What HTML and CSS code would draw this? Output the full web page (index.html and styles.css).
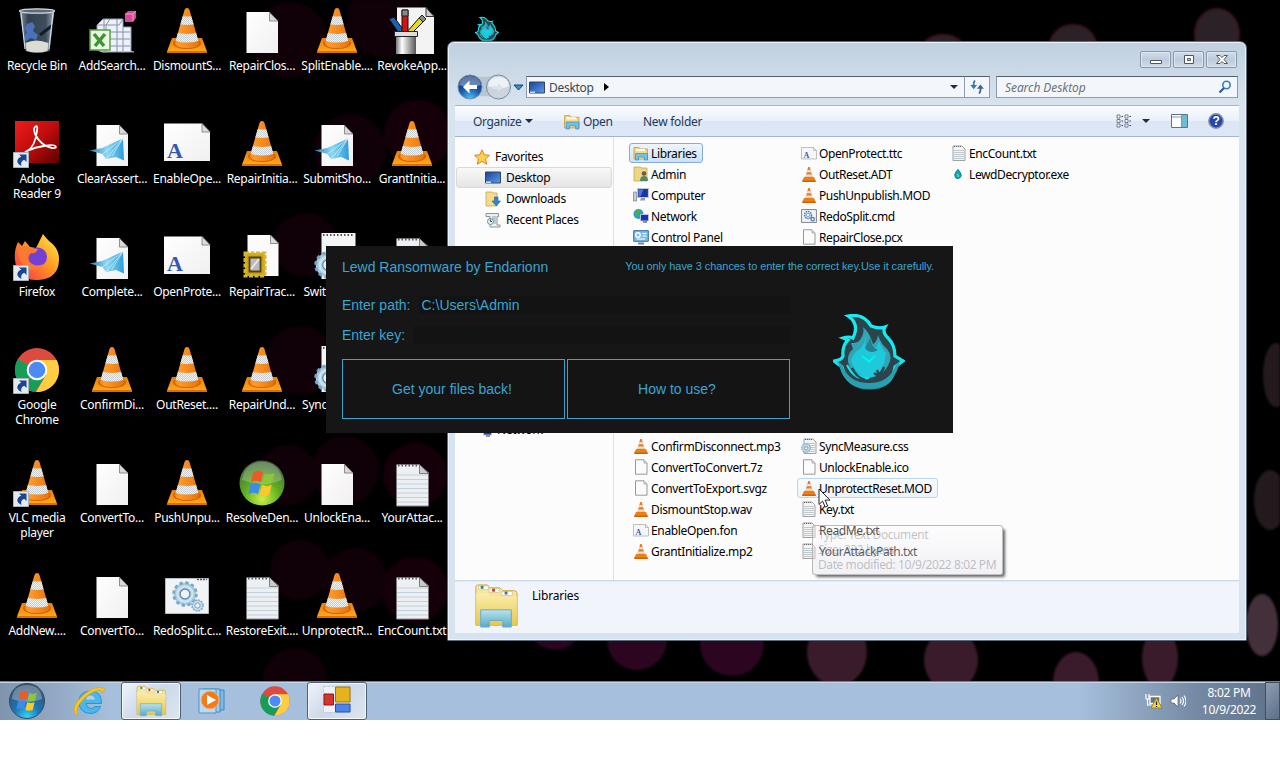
FILE: index.html
```html
<!DOCTYPE html>
<html lang="en">
<head>
<meta charset="utf-8">
<title>Desktop</title>
<link rel="stylesheet" href="styles.css">
</head>
<body>
<svg class="defs" width="0" height="0">
  <defs>
    <linearGradient id="gCone" x1="0" x2="1"><stop offset="0" stop-color="#e06a08"/><stop offset=".35" stop-color="#ff9a28"/><stop offset="1" stop-color="#d85c00"/></linearGradient>
    <linearGradient id="gBase" x1="0" x2="0" y1="0" y2="1"><stop offset="0" stop-color="#e87f0c"/><stop offset="1" stop-color="#ffa818"/></linearGradient>
    <linearGradient id="gRed" x1="0" x2="1" y1="0" y2="1"><stop offset="0" stop-color="#ee1c1c"/><stop offset=".5" stop-color="#c00c0c"/><stop offset="1" stop-color="#5c0000"/></linearGradient>
    <linearGradient id="gPage" x1="0" x2="1" y1="0" y2="1"><stop offset="0" stop-color="#fff"/><stop offset="1" stop-color="#f0f0f0"/></linearGradient>
    <linearGradient id="gFold" x1="0" x2="0" y1="0" y2="1"><stop offset="0" stop-color="#fbeeb0"/><stop offset="1" stop-color="#e8c84c"/></linearGradient>
    <linearGradient id="gStand" x1="0" x2="0" y1="0" y2="1"><stop offset="0" stop-color="#b5e4f6"/><stop offset="1" stop-color="#4ca7d8"/></linearGradient>
    <linearGradient id="gPlane" x1="0" x2="1"><stop offset="0" stop-color="#2382b8"/><stop offset=".5" stop-color="#8fd8f2"/><stop offset="1" stop-color="#2b9dd8"/></linearGradient>
    <linearGradient id="gMon" x1="0" x2="1" y1="0" y2="1"><stop offset="0" stop-color="#1c3f9c"/><stop offset="1" stop-color="#5aa0e6"/></linearGradient>
    <linearGradient id="gFox" x1="1" x2="0" y1="0" y2="1"><stop offset="0" stop-color="#fff04a"/><stop offset=".45" stop-color="#ff9a22"/><stop offset="1" stop-color="#f5224e"/></linearGradient>
    <linearGradient id="gBin" x1="0" x2="1"><stop offset="0" stop-color="#8796a6"/><stop offset=".25" stop-color="#33414f"/><stop offset=".75" stop-color="#3e4d5c"/><stop offset="1" stop-color="#a3b0bc"/></linearGradient>
    <linearGradient id="gCup" x1="0" x2="1"><stop offset="0" stop-color="#777"/><stop offset=".3" stop-color="#fff"/><stop offset="1" stop-color="#555"/></linearGradient>
    <linearGradient id="gRim" x1="0" x2="0" y1="0" y2="1"><stop offset="0" stop-color="#14eef4"/><stop offset=".7" stop-color="#1fe0e8"/><stop offset="1" stop-color="#2b93a4"/></linearGradient>
    <radialGradient id="gGreen" cx=".5" cy=".85" r=".8"><stop offset="0" stop-color="#c8f04a"/><stop offset=".5" stop-color="#5fae1e"/><stop offset="1" stop-color="#456b3c"/></radialGradient>
    <radialGradient id="gOrb" cx=".5" cy=".95" r=".85"><stop offset="0" stop-color="#35d4f8"/><stop offset=".45" stop-color="#1c74b4"/><stop offset="1" stop-color="#36546f"/></radialGradient>
    <radialGradient id="gBack" cx=".5" cy="1" r=".9"><stop offset="0" stop-color="#46c8f8"/><stop offset=".5" stop-color="#1d5cb0"/><stop offset="1" stop-color="#0e2f72"/></radialGradient>
    <pattern id="pChk" width="2" height="2" patternUnits="userSpaceOnUse"><path d="M0 0h2v2H0z" fill="#f2f4f6"/><path d="M0 0h1v1H0zM1 1h1v1H1z" fill="#c4ccd2"/></pattern>
    <clipPath id="cCone"><path d="M21.500 3q.5-2 2.500-2t2.500 2L36 36q0 5-12 5T12 36z"/></clipPath>

    <symbol id="cone" viewBox="0 0 48 48">
      <path d="M9 31h30l5 13.500H4z" fill="url(#gBase)"/><path d="M4 44h40v2H4z" fill="#d96f06"/><ellipse cx="24" cy="36.500" rx="14" ry="5.500" fill="#d26404"/>
      <g clip-path="url(#cCone)"><path d="M0 0h48v48H0z" fill="url(#gCone)"/><path d="M10 8q14 3 28 0v8q-14 4-28 0zM10 25q14 4 28 0v8q-14 5-28 0z" fill="url(#pChk)"/></g>
    </symbol>
    <symbol id="cone-s" viewBox="0 0 16 16"><path d="M3 11h10l1.700 4H1.300z" fill="#f08010"/><path d="M1.200 14.500h13.600V16H1.200z" fill="#d06000"/><path d="M7.200 1h1.600l3 11q-3.800 2-7.600 0z" fill="#ee7c14"/><path d="M6.400 4h3.200l.6 2.200H5.800zM5.200 8.500h5.600l.6 2.200H4.600z" fill="#dfe3e8"/></symbol>
    <symbol id="page" viewBox="0 0 48 48"><path d="M8.500 5h23l8.500 9v32H8.500z" fill="url(#gPage)"/><path d="M31.500 5.500v8.500H40z" fill="#d8d8d8" stroke="#777" stroke-width=".8"/></symbol>
    <symbol id="page-s" viewBox="0 0 16 16"><path d="M2.500.8h8.500l3 3.200v11.200H2.500z" fill="#fbfbfb" stroke="#8c8c8c" stroke-width=".9"/><path d="M11 .8V4h3" fill="#ddd" stroke="#999" stroke-width=".7"/></symbol>
    <symbol id="plane" viewBox="0 0 48 48"><use href="#page"/><path d="M1.500 30.500L14 28 35 18.500 36 40.500 28 37 18 39 14.500 34z" fill="url(#gPlane)"/><path d="M14.500 34L35 18.500 18 39M35 18.500L24 36" stroke="#d5f2fc" stroke-width=".7" fill="none"/></symbol>
    <symbol id="font" viewBox="0 0 48 48"><path d="M1 3.500h38l8 8V41H1z" fill="url(#gPage)"/><path d="M39 3.500V12h8z" fill="#ddd" stroke="#777" stroke-width=".8"/><text x="4" y="38" class="glyph-a">A</text></symbol>
    <symbol id="font-s" viewBox="0 0 16 16"><path d="M.5 2.500h12l3 3V14H.5z" fill="#f5f6f8" stroke="#a8a8a8" stroke-width=".7"/><path d="M12.500 2.500v3h3" fill="none" stroke="#aaa" stroke-width=".7"/><text x="2.500" y="12.500" class="glyph-as">A</text></symbol>
    <symbol id="note" viewBox="0 0 48 48"><path d="M8.500 5.500h23l9 8V47h-32z" fill="#edf0f3"/><path d="M9 16h31M9 20.500h31M9 25h31M9 29.500h31M9 34h31M9 38.500h31M9 43h31" stroke="#c3cedb" stroke-width="1"/><path d="M10 6.500h22" stroke="#555" stroke-width="2" stroke-dasharray="1.500 2"/><path d="M31.500 5.500v9h9z" fill="#c8ccd0" stroke="#666" stroke-width=".8"/><path d="M8.500 47h32" stroke="#889"/></symbol>
    <symbol id="note-s" viewBox="0 0 16 16"><path d="M2 1h9l3 3v11.500H2z" fill="#f2f4f5" stroke="#999" stroke-width=".9"/><path d="M3 5.500h10M3 7.500h10M3 9.500h10M3 11.500h10M3 13.500h10" stroke="#b4bcc4" stroke-width=".8"/><path d="M3 1.500h8" stroke="#666" stroke-dasharray="1 1"/></symbol>
    <symbol id="gear" viewBox="0 0 24 24"><circle cx="12" cy="12" r="7.500" fill="none" stroke="#a9cbe0" stroke-width="6"/><circle cx="12" cy="12" r="10.500" fill="none" stroke="#7ba6c8" stroke-width="2.500" stroke-dasharray="3 2.500"/><circle cx="12" cy="12" r="7" fill="none" stroke="#cfe5f0" stroke-width="2"/><circle cx="12" cy="12" r="4.500" fill="none" stroke="#5580a8"/></symbol>
    <symbol id="gearpage" viewBox="0 0 48 48"><path d="M8.500 0h34v46h-34z" fill="#f4f5f6"/><path d="M10 2h31" stroke="#555" stroke-width="2" stroke-dasharray="1.500 2"/><use href="#gear" x="1" y="18" width="28" height="28"/></symbol>
    <symbol id="gearpage-s" viewBox="0 0 16 16"><use href="#note-s" x="1"/><use href="#gear" x="0" y="5" width="10" height="10"/></symbol>
    <symbol id="cmd" viewBox="0 0 48 48"><path d="M2.500 6.500h43v35h-43z" fill="#f2f3f5" stroke="#b7bcc2"/><path d="M34 7.500h10" stroke="#555" stroke-width="1.500" stroke-dasharray="2 1"/><use href="#gear" x="9" y="9" width="26" height="26"/><use href="#gear" x="28" y="27" width="13" height="13"/></symbol>
    <symbol id="cmd-s" viewBox="0 0 16 16"><path d="M.6 1.600h14.800v12.800H.6z" fill="#f4f6f9" stroke="#7d838a"/><circle cx="7" cy="7" r="3.500" fill="none" stroke="#4f83b5" stroke-width="1.600" stroke-dasharray="1.600 .7"/><circle cx="7" cy="7" r="1.800" fill="none" stroke="#7da3c8"/><circle cx="11.700" cy="11.200" r="1.700" fill="none" stroke="#4f83b5" stroke-width="1.300"/></symbol>
    <symbol id="stamp" viewBox="0 0 48 48"><path d="M9.500 2h23l8 8v33h-31z" fill="#fbfbfb"/><path d="M32.500 2v8.500h8z" fill="#ddd" stroke="#777" stroke-width=".8"/><path d="M7 20h20v23H7z" fill="#c9a41c" stroke="#d9b72c" stroke-width="3" stroke-dasharray="4 1.500"/><path d="M11.500 24.500h11v14h-11z" fill="#b9b9c2" stroke="#54440a" stroke-width="1.800"/><path d="M13 36l8-10" stroke="#e6e6ee" stroke-width="2"/></symbol>
    <symbol id="arrow" viewBox="0 0 16 16"><path d="M.5.500h15v15H.5z" fill="#e4eaf0" stroke="#aab4bf"/><path d="M6 2.500h7.500V10l-2.300-2.300Q7 9.500 8.500 14 2.500 11 5 7q1.200-1.600 3.300-2.200z" fill="#1a4590"/></symbol>
    <symbol id="win" viewBox="0 0 24 24"><path d="M5 4q4-2.500 7.500 0l-1.700 7.500q-3.800-2.300-7.400 0z" fill="#ee5a24"/><path d="M13.800 4.800q3.800 2 7.200-.4l-1.800 7.500q-3.600 2-7.200 0z" fill="#8cc63e"/><path d="M3 13q3.700-2.400 7.400 0l-1.800 7.500q-3.600-2.300-7.400 0z" fill="#3c8ce8"/><path d="M11.700 13.400q3.700 2.100 7.200 0l-1.800 7.400q-3.600 2.100-7.200 0z" fill="#fcc82c"/></symbol>
    <symbol id="greenorb" viewBox="0 0 48 48"><circle cx="24" cy="24" r="22.500" fill="url(#gGreen)"/><path d="M4 21q3-18 20-18t20 18q-20 8-40 0z" fill="#fff" opacity=".22"/><use href="#win" x="8.500" y="8" width="32" height="32"/></symbol>
    <symbol id="bin" viewBox="0 0 48 48"><path d="M6.500 3h35l-5 41q-12 4-24 0z" fill="url(#gBin)"/><ellipse cx="24" cy="4" rx="17.500" ry="2.200" fill="#5d6c7a" stroke="#d5dde4" stroke-width="1.200"/><path d="M12.500 36q10-5 23 0l-1 8q-10 3-21 0z" fill="#dcdcd4"/><path d="M14 17l5-2 3 4-2 5 5 4-2 5-5-2-5 3-3-4 4-4-2-5z" fill="#4a72ba"/><path d="M27 28l13-10" stroke="#141c28" stroke-width="3"/><path d="M8 6l4 36M40 6l-4 36" stroke="#d3dce4" stroke-width="1.200"/></symbol>
    <symbol id="adobe" viewBox="0 0 48 48"><path d="M2 1h44v42H2z" fill="url(#gRed)"/><path d="M14 31q8-4 10-20 1-6-1.500-4.500T22 14q6 12 17 14 5 .5 3.500-1.800T31 26q-9 1-17 5-3 2-1 1z" fill="none" stroke="#fff" stroke-width="1.800"/></symbol>
    <symbol id="excel" viewBox="0 0 48 48"><path d="M9 18l6-6h20v8h8v24l3 1H14l-5-2z" fill="#eef2f8" stroke="#8b9ab4"/><path d="M9 18h22l4-6M16 12v34M22 12l-4 6v28M29 12v33M35 20v26M22 25h20M22 32h20M22 39h20" stroke="#8292b0" fill="none"/><path d="M37 7l3-3h8v7l-3 4h-8z" fill="#d8489c"/><path d="M37 7h8v7M45 7l3-3" stroke="#f4a0cc" fill="none"/><path d="M2 23h20v20H2z" fill="#e9f6e4" stroke="#5aa046" stroke-width="1.500"/><path d="M6 27l10 12M17 27L7 39" stroke="#3c9433" stroke-width="3.500"/></symbol>
    <symbol id="paint" viewBox="0 0 48 48"><path d="M9 .5h29l8 8.500v38H9z" fill="#f3f3f3"/><path d="M38 .5v9h8z" fill="#ccc" stroke="#333"/><path d="M1 12l5-2 11 15h-7z" fill="#1e5fae" stroke="#111"/><path d="M14 3h6v22h-6z" fill="#d41414" stroke="#111"/><path d="M32 10l4 4-12 12h-6z" fill="#e8d820" stroke="#111"/><path d="M14 3h6v6h-6zM31 11l3-3 4 4-3 3z" fill="#888" stroke="#222"/><path d="M8 26h20v21H8z" fill="url(#gCup)"/><path d="M6.500 24.500h23v5h-23z" fill="#ddd" stroke="#222"/></symbol>
    <symbol id="firefox" viewBox="0 0 48 48"><path d="M30 1q3 4 6 7 10 7 10 18 0 20-21 21T2 27Q1 17 5 9l4 4 3-5 5 6 6 1q4-8 7-14z" fill="url(#gFox)"/><circle cx="24.500" cy="24" r="9.500" fill="#7440d4"/><path d="M5 14q8-2 12 1l8 1q-2 5-7 4-4 4-2 8 5 7 15 3-6 8-16 5Q5 31 5 14z" fill="#ff7a30"/></symbol>
    <symbol id="chrome" viewBox="0 0 48 48"><circle cx="24" cy="24" r="22" fill="#dd4b3e"/><path d="M24 24L4.900 13A22 22 0 0 0 22 46l11-17z" fill="#169d57"/><path d="M24 14h19.600A22 22 0 0 1 23 46l10-17z" fill="#ffcd42"/><circle cx="24" cy="24" r="10.300" fill="#fff"/><circle cx="24" cy="24" r="8.300" fill="#4c8bf5"/></symbol>
    <symbol id="flame" viewBox="0 0 72 76"><path d="M15 2Q31-1 38 12q8 3 14 1-3 5 3 11 7 7 7 18l8 5-8 6Q59 74 36 74 14 73 9 53l-8-6q8-1 9-5-1-10 5-16l-5-2q6-2 10 0Q27 10 15 2z" fill="#2c444c" stroke="url(#gRim)" stroke-width="3.200"/><path d="M9 51q7 18 27 18t27-18l4-4q-5 26-31 27T5 47z" fill="#289eae"/><path d="M30 13q7 6 10 17 4-2 5-9 3 9 9 14 5 6 3 12-5 15-21 17-17-1-21-16-1-8 5-13l-2-6q6 0 8-2 6-7 4-14z" fill="#2fa5b6"/><path d="M33 17q1 8-1 13 3 10 12 2l2-5q3 8 7 12-2 22-18 25Q22 61 18 46q3-8 9-11 7-8 6-18z" fill="#1fc9dc"/><path d="M38 23q-1 10 7 13-8 5-13-2z" fill="#257d8e"/><path d="M29 42l7 5 6-5-6 6z" fill="#0ff" stroke="#00f2f6" stroke-width="1.500"/><path d="M14 51q8 16 21 13M20 57q8 8 16 7" stroke="#0ce8ee" stroke-width="2" fill="none"/><path d="M44 56l3 7-6-4M51 53q-3 8-10 13M19 54q4 9 13 12" stroke="#2c444c" stroke-width="2.500" fill="none"/></symbol>
    <symbol id="libs" viewBox="0 0 48 48"><path d="M3 4q0-2 2-2h10l3 3h10l3 3h12q3 0 3 3v33H3z" fill="url(#gFold)" stroke="#c9a548"/><path d="M6 3h10v4H6zM17 6h10v4H17zM30 9h11v4H30z" fill="#fff" stroke="#c3b078" stroke-width=".6"/><path d="M8 3h3v3H8z" fill="#3c8c4c"/><path d="M20 6h3v3h-3z" fill="#c03c2c"/><path d="M33 9h3v3h-3z" fill="#486c9c"/><path d="M3 11h12l3 3h28v30H3z" fill="url(#gFold)" opacity=".8"/><path d="M8 28h32v18h-9v-7H17v7H8z" fill="url(#gStand)" stroke="#5fa9cc" opacity=".92"/></symbol>
    <symbol id="libs-s" viewBox="0 0 16 16"><path d="M1 2.500h5l1 1.500h7.500v10H1z" fill="#f5dc84" stroke="#bf9b3e" stroke-width=".8"/><path d="M3 4h9v2H3z" fill="#fffbe8"/><path d="M2.500 8.500h12V15h-3v-3h-6v3h-3z" fill="#74c2ea" stroke="#3c8abc" stroke-width=".7"/></symbol>
    <symbol id="mon" viewBox="0 0 16 12"><path d="M.5.500h15v11H.5z" fill="url(#gMon)" stroke="#33465e"/><path d="M1 10h5v1.500H1z" fill="#cde"/></symbol>
    <symbol id="folder-user" viewBox="0 0 16 16"><path d="M1 1h6l2 1h5v13H1z" fill="#f0d684" stroke="#c9a64c" stroke-width=".8"/><circle cx="11" cy="7.500" r="2.300" fill="#6d5a44"/><path d="M7 15q0-5 4-5t4 5z" fill="#538a62"/></symbol>
    <symbol id="folder-down" viewBox="0 0 16 16"><path d="M1 1h6l2 1h3v13H1z" fill="#f5dc8c" stroke="#c9a64c" stroke-width=".8"/><path d="M9.500 6h3.500v4h2.500l-4.200 5L7 10h2.500z" fill="#2e86d4" stroke="#1c5ca4" stroke-width=".6"/></symbol>
    <symbol id="recent" viewBox="0 0 16 16"><path d="M1 1.500h12.500v3H12V13h3v2H5V4.500H1z" fill="#eef1f3" stroke="#8a949c"/><path d="M7 5h4M7 7h4M8 9h3M9 11h2" stroke="#8ca0b0"/><circle cx="5.500" cy="9.500" r="3" fill="#e6f3ea" stroke="#6d8a96"/><path d="M5.500 7.500v2H7" stroke="#345" fill="none"/></symbol>
    <symbol id="computer" viewBox="0 0 16 16"><path d="M.5 5h3v9h-3z" fill="#c7ccd0" stroke="#767c84" stroke-width=".7"/><path d="M4.500 1.500h11v9h-11z" fill="#1933a8" stroke="#c3c8d2" stroke-width="1.200"/><path d="M5.500 2.500h5l-3 7h-2z" fill="#4f74dc"/><path d="M8 11h4v2.500H7z" fill="#999"/></symbol>
    <symbol id="net" viewBox="0 0 16 16"><circle cx="5.500" cy="6" r="5" fill="#2c9ad0"/><path d="M2 3q4-3 6 0-3 2-3 6-3-2-3-6z" fill="#45b04e"/><path d="M7.500 6.500h8v6.500h-8z" fill="#1933b8" stroke="#bcc4d0"/><path d="M10 14h4" stroke="#777" stroke-width="1.500"/></symbol>
    <symbol id="cpl" viewBox="0 0 16 16"><path d="M.7 1.700h14.600v10.600H.7z" fill="#7cbce8" stroke="#2e6fa8"/><circle cx="5" cy="6" r="2.200" fill="none" stroke="#fff" stroke-width="1.400"/><path d="M9.500 4.500h4M9.500 7h4M4 10h8" stroke="#fff" stroke-width="1.200"/><path d="M5 14.500h6" stroke="#789" stroke-width="2"/></symbol>
    <symbol id="drop" viewBox="0 0 16 16"><path d="M7 3.500q3.600 4 3.200 6.300T7 12.500 3.800 9.800 7 3.500z" fill="#16a7b0" stroke="#0d7f8a"/><path d="M6 8q2 1 1 3" stroke="#74f0f4" fill="none"/></symbol>
  </defs>
</svg>

<div class="screen">
  <svg class="wallpaper" width="1280" height="720" viewBox="0 0 1280 720" aria-hidden="true">
    <g fill="#16000a" opacity=".75"><circle cx="350" cy="150" r="36"/><circle cx="418" cy="134" r="34" fill="#1d000d"/><circle cx="290" cy="40" r="38"/><circle cx="305" cy="245" r="32"/><circle cx="300" cy="360" r="34"/><circle cx="345" cy="470" r="34"/><circle cx="415" cy="475" r="32" fill="#1d000d"/><circle cx="288" cy="475" r="30"/><circle cx="300" cy="570" r="30"/><circle cx="355" cy="580" r="32"/><circle cx="415" cy="590" r="33" fill="#1d000d"/><circle cx="295" cy="680" r="32"/><circle cx="385" cy="20" r="38"/></g>
    <g fill="#2c0620"><circle cx="555" cy="622" r="28"/><circle cx="637" cy="640" r="30"/><circle cx="732" cy="644" r="32"/></g>
    <g fill="#3a1b2b"><ellipse cx="837" cy="652" rx="30" ry="34"/><ellipse cx="951" cy="660" rx="27" ry="31"/><ellipse cx="1076" cy="683" rx="23" ry="31"/><ellipse cx="1160" cy="658" rx="18" ry="30"/></g>
    <g fill="#2b2227" stroke="#3c1520" stroke-width="2"><ellipse cx="943" cy="48" rx="20" ry="13"/><ellipse cx="1073" cy="46" rx="23" ry="21"/><ellipse cx="1217" cy="34" rx="22" ry="25"/></g>
    <g fill="#241a1e"><ellipse cx="1276" cy="375" rx="13" ry="32"/><ellipse cx="1270" cy="500" rx="16" ry="30"/><ellipse cx="1262" cy="625" rx="16" ry="31" fill="#43303a"/></g>
  </svg>

  <main class="desk">
    <div class="ico"><svg><use href="#bin"/></svg><span>Recycle Bin</span></div>
    <div class="ico"><svg><use href="#adobe"/><use href="#arrow" x="0" y="32" width="16" height="16"/></svg><span>Adobe<br>Reader 9</span></div>
    <div class="ico"><svg><use href="#firefox"/><use href="#arrow" x="0" y="32" width="16" height="16"/></svg><span>Firefox</span></div>
    <div class="ico"><svg><use href="#chrome"/><use href="#arrow" x="0" y="32" width="16" height="16"/></svg><span>Google<br>Chrome</span></div>
    <div class="ico"><svg><use href="#cone"/><use href="#arrow" x="0" y="32" width="16" height="16"/></svg><span>VLC media<br>player</span></div>
    <div class="ico"><svg><use href="#cone"/></svg><span>AddNew....</span></div>

    <div class="ico"><svg><use href="#excel"/></svg><span>AddSearch...</span></div>
    <div class="ico"><svg><use href="#plane"/></svg><span>ClearAssert...</span></div>
    <div class="ico"><svg><use href="#plane"/></svg><span>Complete...</span></div>
    <div class="ico"><svg><use href="#cone"/></svg><span>ConfirmDi...</span></div>
    <div class="ico"><svg><use href="#page"/></svg><span>ConvertTo...</span></div>
    <div class="ico"><svg><use href="#page"/></svg><span>ConvertTo...</span></div>

    <div class="ico"><svg><use href="#cone"/></svg><span>DismountS...</span></div>
    <div class="ico"><svg><use href="#font"/></svg><span>EnableOpe...</span></div>
    <div class="ico"><svg><use href="#font"/></svg><span>OpenProte...</span></div>
    <div class="ico"><svg><use href="#cone"/></svg><span>OutReset....</span></div>
    <div class="ico"><svg><use href="#cone"/></svg><span>PushUnpu...</span></div>
    <div class="ico"><svg><use href="#cmd"/></svg><span>RedoSplit.c...</span></div>

    <div class="ico"><svg><use href="#page"/></svg><span>RepairClos...</span></div>
    <div class="ico"><svg><use href="#cone"/></svg><span>RepairInitia...</span></div>
    <div class="ico"><svg><use href="#stamp"/></svg><span>RepairTrac...</span></div>
    <div class="ico"><svg><use href="#cone"/></svg><span>RepairUnd...</span></div>
    <div class="ico"><svg><use href="#greenorb"/></svg><span>ResolveDen...</span></div>
    <div class="ico"><svg><use href="#note"/></svg><span>RestoreExit....</span></div>

    <div class="ico"><svg><use href="#cone"/></svg><span>SplitEnable....</span></div>
    <div class="ico"><svg><use href="#plane"/></svg><span>SubmitSho...</span></div>
    <div class="ico"><svg><use href="#gearpage"/></svg><span>SwitchRest...</span></div>
    <div class="ico"><svg><use href="#gearpage"/></svg><span>SyncMeasu...</span></div>
    <div class="ico"><svg><use href="#page"/></svg><span>UnlockEna...</span></div>
    <div class="ico"><svg><use href="#cone"/></svg><span>UnprotectR...</span></div>

    <div class="ico"><svg><use href="#paint"/></svg><span>RevokeApp...</span></div>
    <div class="ico"><svg><use href="#cone"/></svg><span>GrantInitia...</span></div>
    <div class="ico"><svg><use href="#note"/></svg></div>
    <div class="ico"></div>
    <div class="ico"><svg><use href="#note"/></svg><span>YourAttac...</span></div>
    <div class="ico"><svg><use href="#note"/></svg><span>EncCount.txt</span></div>

    <div class="ico flame-ico"><svg><use href="#flame"/></svg></div>
  </main>

  <section class="explorer">
    <header class="caption">
      <button><svg width="34" height="17"><path d="M11.500 9.500h11v3h-11z" fill="#fff" stroke="#4c5866"/></svg></button>
      <button><svg width="34" height="17"><path d="M12.500 4.500h9v8h-9z" fill="#fff" stroke="#4c5866"/><path d="M15.500 7.500h3v2h-3z" fill="#cdd9e6" stroke="#4c5866"/></svg></button>
      <button><svg width="34" height="17"><path d="M11.500 4.500h3.500l2 2 2-2h3.500l-3.500 4 3.500 4H19l-2-2-2 2h-3.500l3.500-4z" fill="#fff" stroke="#4c5866"/></svg></button>
    </header>
    <div class="nav">
      <svg class="travel" width="71" height="26" viewBox="0 0 71 26"><path d="M14 1q14 4 28 0v23q-14-4-28 0z" fill="#b7c4d2"/><circle cx="15" cy="13" r="12" fill="url(#gBack)" stroke="#7a8da6"/><path d="M4 11q2-9 11-9t11 9q-11 4-22 0z" fill="#fff" opacity=".35"/><path d="M14.500 6.500L8 13l6.500 6.500V15H22v-4h-7.500z" fill="#fff"/><circle cx="43.500" cy="13" r="12" fill="#ccd5df" stroke="#7e8b9b"/><path d="M33 12q1-9 10.500-9T54 12q-10 5-21 0z" fill="#eef2f6"/><path d="M43 9l5 4.500-5 4.500v-3h-6v-3h6z" fill="#dde3ea"/><path d="M59 11h9l-4.500 5z" fill="#3d8fc4" stroke="#14406e"/></svg>
      <div class="address"><svg width="16" height="13"><use href="#mon"/></svg><span>Desktop</span><i class="tri-r"></i><i class="tri-d"></i></div>
      <div class="refresh"><svg width="14" height="14" viewBox="0 0 14 14"><path d="M5 .5Q3.300 2 3.700 6" fill="none" stroke="#3878b4" stroke-width="1.800"/><path d="M.3 5h6.800L3.700 9.300z" fill="#3878b4"/><path d="M9 13.500q2-1.500 1.400-5.500" fill="none" stroke="#3f6490" stroke-width="1.800"/><path d="M6.900 8.800h7L10.400 4.500z" fill="#3f6490"/></svg></div>
      <div class="search"><em>Search Desktop</em><svg width="14" height="14" viewBox="0 0 14 14"><circle cx="8.500" cy="5" r="3.700" fill="#eef6fc" stroke="#3b7cc0" stroke-width="1.600"/><path d="M6 8l-4.500 4.500" stroke="#2a5a98" stroke-width="2.200"/></svg></div>
    </div>
    <div class="tools">
      <span class="t-org">Organize</span><i class="tri-d"></i>
      <svg class="t-lib" width="18" height="17"><use href="#libs-s"/></svg><span class="t-open">Open</span><span class="t-new">New folder</span>
      <div class="t-right">
        <svg width="16" height="14" viewBox="0 0 16 14"><path d="M1 1h3v3H1zM1 5.500h3v3H1zM1 10h3v3H1zM9 1h3v3H9zM9 5.500h3v3H9zM9 10h3v3H9z" fill="#fff" stroke="#60708a" stroke-width=".9"/><path d="M5.500 2.500H7M5.500 7H7M5.500 11.500H7M13.500 2.500H15M13.500 7H15M13.500 11.500H15" stroke="#445"/></svg>
        <i class="tri-d"></i>
        <svg class="t-pane" width="17" height="14"><path d="M.5.500h16v13H.5z" fill="#fff" stroke="#5b7390"/><path d="M11 1h5v12h-5z" fill="#70bad4"/><path d="M1 3h10M10.500 1v12" stroke="#8398ae"/></svg>
        <svg width="16" height="16" viewBox="0 0 16 16"><circle cx="8" cy="8" r="7.200" fill="#2447a8" stroke="#8893b0" stroke-width="1.500"/><text x="8" y="12.300" class="q">?</text></svg>
      </div>
    </div>
    <div class="body">
      <aside>
        <div class="side head"><svg width="16" height="16" viewBox="0 0 16 16"><path d="M8 .8l2.200 5 5.300.5-4 3.600 1.200 5.300L8 12.400l-4.700 2.800 1.200-5.300-4-3.600 5.300-.5z" fill="#ffd04e" stroke="#e0801c"/></svg>Favorites</div>
        <div class="side sel"><svg width="16" height="13"><use href="#mon"/></svg>Desktop</div>
        <div class="side"><svg width="16" height="16"><use href="#folder-down"/></svg>Downloads</div>
        <div class="side"><svg width="16" height="16"><use href="#recent"/></svg>Recent Places</div>
        <div class="side netrow"><svg width="16" height="16"><use href="#net"/></svg>Network</div>
      </aside>
      <div class="files">
        <div class="col">
          <div class="f picked"><svg><use href="#libs-s"/></svg>Libraries</div>
          <div class="f"><svg><use href="#folder-user"/></svg>Admin</div>
          <div class="f"><svg><use href="#computer"/></svg>Computer</div>
          <div class="f"><svg><use href="#net"/></svg>Network</div>
          <div class="f"><svg><use href="#cpl"/></svg>Control Panel</div>
          <div class="f row13"><svg><use href="#note-s"/></svg></div>
          <div class="f"><svg><use href="#cone-s"/></svg>ConfirmDisconnect.mp3</div>
          <div class="f"><svg><use href="#page-s"/></svg>ConvertToConvert.7z</div>
          <div class="f"><svg><use href="#page-s"/></svg>ConvertToExport.svgz</div>
          <div class="f"><svg><use href="#cone-s"/></svg>DismountStop.wav</div>
          <div class="f"><svg><use href="#font-s"/></svg>EnableOpen.fon</div>
          <div class="f"><svg><use href="#cone-s"/></svg>GrantInitialize.mp2</div>
        </div>
        <div class="col c2">
          <div class="f"><svg><use href="#font-s"/></svg>OpenProtect.ttc</div>
          <div class="f"><svg><use href="#cone-s"/></svg>OutReset.ADT</div>
          <div class="f"><svg><use href="#cone-s"/></svg>PushUnpublish.MOD</div>
          <div class="f"><svg><use href="#cmd-s"/></svg>RedoSplit.cmd</div>
          <div class="f"><svg><use href="#page-s"/></svg>RepairClose.pcx</div>
          <div class="f row13"><svg><use href="#note-s"/></svg></div>
          <div class="f"><svg><use href="#gearpage-s"/></svg>SyncMeasure.css</div>
          <div class="f"><svg><use href="#page-s"/></svg>UnlockEnable.ico</div>
          <div class="f hover"><svg><use href="#cone-s"/></svg>UnprotectReset.MOD</div>
          <div class="f"><svg><use href="#note-s"/></svg>Key.txt</div>
          <div class="f"><svg><use href="#note-s"/></svg>ReadMe.txt</div>
          <div class="f"><svg><use href="#note-s"/></svg>YourAttackPath.txt</div>
        </div>
        <div class="col c3">
          <div class="f"><svg><use href="#note-s"/></svg>EncCount.txt</div>
          <div class="f"><svg><use href="#drop"/></svg>LewdDecryptor.exe</div>
        </div>
      </div>
    </div>
    <footer class="details"><svg width="46" height="46"><use href="#libs"/></svg><span>Libraries</span></footer>
  </section>

  <div class="tip"><span>Type: Text Document</span><span>Size: 332 bytes</span><span>Date modified: 10/9/2022 8:02 PM</span></div>

  <section class="dialog">
    <div class="d-head"><span class="d-title">Lewd Ransomware by Endarionn</span><span class="d-note">You only have 3 chances to enter the correct key.Use it carefully.</span></div>
    <div class="d-row path"><label>Enter path:</label><div class="field">C:\Users\Admin</div></div>
    <div class="d-row key"><label>Enter key:</label><div class="field"></div></div>
    <div class="d-buttons"><button>Get your files back!</button><button>How to use?</button></div>
    <svg class="d-logo" width="72" height="76"><use href="#flame"/></svg>
  </section>

  <svg class="cursor" width="14" height="21" viewBox="0 0 14 21"><path d="M1 1v15.500l3.600-3.400 2.600 6 2.500-1-2.600-6H12z" fill="#fff" stroke="#222"/></svg>

  <nav class="taskbar">
    <div class="start"><svg width="38" height="38" viewBox="0 0 38 38"><circle cx="19" cy="19" r="17.500" fill="url(#gOrb)" stroke="#2f4a66"/><path d="M4 17Q5 3 19 3t15 14q-15 6-30 0z" fill="#fff" opacity=".28"/><use href="#win" x="7" y="6" width="25" height="25"/></svg></div>
    <div class="task"><svg width="32" height="32" viewBox="0 0 32 32"><path d="M27.500 21.500q-2.500 7-10.500 7-11-1-11-11.500T17 6q12 0 11.500 12.500H13q.5 4.500 4.500 5 3.500 0 4.500-2z" fill="#48b8ee" stroke="#2488c4" stroke-width=".8"/><path d="M13 14.500q1-4 4.500-4t4.500 4z" fill="#b9cfe6"/><path d="M3 29.500Q-3 23 9 11.500T30.500 3Q33 5 29 8q1-4-5-2.500Q13 9 6.500 19 2 26 5 28.500z" fill="#f9c820" stroke="#e0a818" stroke-width=".8"/></svg></div>
    <div class="task on"><svg width="34" height="32"><use href="#libs"/></svg></div>
    <div class="task"><svg width="30" height="28" viewBox="0 0 30 28"><path d="M8 3h18v20H8z" fill="#7ebce4" stroke="#3c88be"/><path d="M5 2h17v23H5z" fill="#9fd0ee" stroke="#3c88be"/><path d="M1 2h17v24H1z" fill="#b7dcf2" stroke="#4c94c4"/><circle cx="12" cy="13" r="9" fill="#f27c1c" stroke="#f8b080"/><path d="M9 8l9 5-9 5z" fill="#fff"/></svg></div>
    <div class="task"><svg width="32" height="32"><use href="#chrome"/></svg></div>
    <div class="task on"><svg class="app" width="28" height="27" viewBox="0 0 28 27"><path d="M.5.500h27v26H.5z" fill="#eef2f8" stroke="#c3cad6" stroke-dasharray="3 1"/><path d="M12.500 1h14.500v15H12.500z" fill="#e5b31c" stroke="#9c7410"/><path d="M1 8h9.500v11H1z" fill="#d4342c" stroke="#8c1814"/><path d="M12.500 18h14.500v8H12.500z" fill="#4c84ec" stroke="#2850a8"/></svg></div>
    <div class="tray">
      <svg width="18" height="16" viewBox="0 0 18 16"><path d="M5 3.500h10v7H5z" fill="#627488" stroke="#fff" stroke-width="1.300"/><path d="M1 1v5h3V1M2.500 6v6h4M7 13h5" fill="none" stroke="#fff" stroke-width="1.200"/><path d="M11.500 5l5.500 10H6z" fill="#fad536" stroke="#92780c" stroke-width=".8"/><path d="M11.500 8.500v3.500M11.500 13v1" stroke="#222" stroke-width="1.200"/></svg>
      <svg width="16" height="14" viewBox="0 0 16 14"><path d="M1 5h3l4-4v12L4 9H1z" fill="#fff" stroke="#5a6a7c" stroke-width=".8"/><path d="M10 4.500q2 2.500 0 5M12 3q3 4 0 8M14 1.500q4 5.500 0 11" fill="none" stroke="#fff" stroke-width="1.100"/></svg>
      <div class="clock">8:02 PM<br>10/9/2022</div>
      <div class="peek"></div>
    </div>
  </nav>
</div>
</body>
</html>
```

FILE: styles.css
```css
* { box-sizing: border-box; }
body { margin: 0; width: 1280px; height: 768px; overflow: hidden; background: #fff; font: 12px/15px "Noto Sans", "Open Sans", sans-serif; letter-spacing: -0.34px; color: #000; }
button { font: inherit; color: inherit; letter-spacing: inherit; padding: 0; margin: 0; }
.defs { position: absolute; }
.screen { position: relative; width: 1280px; height: 720px; background: #000; overflow: hidden; }
.wallpaper { position: absolute; inset: 0; filter: blur(1px); }

.desk { position: relative; display: grid; grid-auto-flow: column; grid-template-rows: repeat(6, 113px); grid-auto-columns: 75px; padding-top: 7px; width: 525px; }
.ico { display: flex; flex-direction: column; align-items: center; color: #fff; text-align: center; white-space: nowrap; width: 74px; }
.ico svg { width: 48px; height: 48px; overflow: visible; flex: none; }
.ico span { margin-top: 3px; text-shadow: 0 1px 2px #000; letter-spacing: -0.27px; }
.flame-ico svg { width: 24px; height: 27px; margin-top: 9px; }
.glyph-a { font: bold 22px "Liberation Serif", serif; fill: #3458b4; }
.glyph-as { font: bold 8px "Liberation Serif", serif; fill: #3458b4; }
.q { font: bold 12px "Liberation Sans", sans-serif; fill: #fff; text-anchor: middle; }

.explorer { position: absolute; left: 447px; top: 41px; width: 800px; height: 600px; display: flex; flex-direction: column; padding: 0 7px 7px; border: 1px solid #5e6a76; border-radius: 7px 7px 1px 1px; background: linear-gradient(#c0d0e0, #d8e4f0 64px, #d6e3f0); box-shadow: inset 0 0 0 1px #eaf2fa; }
.caption { height: 34px; flex: none; display: flex; justify-content: flex-end; gap: 2px; padding: 9px 2px 0 0; }
.caption button { width: 31px; height: 17px; border: 1px solid #8796a8; border-radius: 2px; background: linear-gradient(#d3deea, #bccbdb 50%, #cfdce8); display: flex; justify-content: center; align-items: center; box-shadow: inset 0 0 0 1px #dfe8f1; overflow: hidden; }
.caption button svg { flex: none; }
.nav { height: 29px; flex: none; display: flex; align-items: flex-start; }
.travel { margin-top: -2px; flex: none; }
.address, .refresh, .search { height: 22px; border: 1px solid #8e9dae; border-top-color: #4f5e70; background: #f3f7fb; display: flex; align-items: center; }
.address { width: 439px; padding: 0 6px 0 2px; color: #3c4656; }
.address span { margin: 0 11px 0 4px; letter-spacing: -0.3px; }
.address .tri-r { margin-left: -1px; }
.address .tri-d { margin-left: auto; }
.refresh { width: 25px; border-left: 0; justify-content: center; }
.search { width: 242px; margin-left: 6px; padding: 0 5px 0 8px; color: #6d7278; justify-content: space-between; }
.search em { letter-spacing: -0.08px; }
.tri-r { border: 4px solid transparent; border-left: 5px solid #000; border-right: 0; }
.tri-d { border: 4px solid transparent; border-top: 4px solid #1e2c4c; border-bottom: 0; }
.tools { height: 32px; flex: none; display: flex; align-items: center; padding-left: 18px; border: solid #a4b6cc; border-width: 1px 0; background: linear-gradient(#fbfdff, #e9f0fa 48%, #dce6f4 52%, #dde7f5); color: #1e395b; }
.t-org { width: 46px; margin-right: 6px; white-space: nowrap; }
.t-lib { margin: 0 2px 0 30px; }
.t-open { width: 29px; margin-right: 31px; }
.t-new { letter-spacing: -0.25px; }
.t-right { margin-left: auto; display: flex; align-items: center; padding-right: 15px; }
.t-right .tri-d { margin: 0 21px 0 10px; }
.t-pane { margin-right: 20px; }
.body { flex: 1; display: flex; background: #fcfcfc; min-height: 0; }
aside { width: 159px; border-right: 1px solid #d9e2ee; padding-top: 9px; flex: none; }
.side { height: 21px; display: flex; align-items: center; gap: 5px; padding-left: 29px; border: 1px solid transparent; }
.side.head { padding-left: 18px; }
.side.sel { border-color: #d9d9d9; border-radius: 3px; background: linear-gradient(#f8f8f8, #e5e5e5); margin: 0 1px; padding-left: 28px; }
.netrow { margin-top: 189px; padding-left: 20px; }
.files { display: flex; padding: 6px 0 0 15px; }
.col { width: 168px; }
.c2 { width: 150px; }
.f { height: 20px; margin-bottom: 1px; width: max-content; display: flex; align-items: center; gap: 2px; padding: 0 5px 0 3px; border: 1px solid transparent; border-radius: 3px; }
.f svg { width: 16px; height: 16px; flex: none; }
.c2 .f, .c3 .f { letter-spacing: -0.4px; }
.row13 { margin-top: 168px; }
.picked { border-color: #84acdd; background: linear-gradient(#eef5fd, #cfe1f8); }
.hover { border-color: #b8d6fb; background: linear-gradient(#fafcfe, #ebf3fd); }
.details { height: 53px; flex: none; display: flex; background: #f1f5fb; border-top: 1px solid #ccd8e8; box-shadow: inset 0 1px #e2eaf4; padding: 2px 0 0 18px; }
.details span { margin: 5px 0 0 13px; letter-spacing: -0.2px; }

.tip { position: absolute; left: 812px; top: 525px; width: 191px; height: 50px; display: flex; flex-direction: column; padding: 1px 5px; background: linear-gradient(rgba(255,255,255,.3), rgba(228,229,240,.45)); border: 1px solid rgba(118,118,118,.45); border-radius: 3px; box-shadow: 3px 3px 3px -1px rgba(0,0,0,.6); color: rgba(90,90,90,.36); white-space: nowrap; letter-spacing: -0.42px; }

.dialog { position: absolute; left: 326px; top: 246px; width: 627px; height: 187px; padding: 13px 16px 12px; background: #161616; color: #3aa5d2; font: 14px/16px "Liberation Sans", Arial, sans-serif; letter-spacing: 0; }
.d-head { display: flex; justify-content: space-between; padding-right: 3px; height: 16px; }
.d-note { font-size: 11px; line-height: 15px; letter-spacing: -0.08px; white-space: nowrap; }
.d-row { display: flex; align-items: center; width: 448px; height: 18px; }
.d-row.path { margin-top: 21px; }
.d-row.key { margin-top: 12px; }
.d-row label { white-space: nowrap; }
.field { flex: 1; height: 18px; line-height: 18px; margin-left: 8px; padding-left: 3px; background: #131313; }
.d-buttons { display: grid; grid-template-columns: 223px 223px; gap: 2px; margin-top: 15px; }
.d-buttons button { height: 60px; background: #141414; border: 1px solid #3aa5d2; padding-right: 3px; }
.d-logo { position: absolute; left: 507px; top: 68px; overflow: visible; }
.cursor { position: absolute; left: 818px; top: 488px; }

.taskbar { position: absolute; left: 0; right: 0; bottom: 0; height: 39px; display: flex; align-items: center; gap: 2px; border-top: 1px solid #6d8096; background: linear-gradient(90deg, #7f93ad, #a5bfdc 110px, #a5bfdc 1080px, #7388a2 1200px, #5d7189); box-shadow: inset 0 1px #c5d5e6; }
.start { width: 57px; height: 38px; padding-left: 8px; }
.task { width: 60px; height: 38px; display: flex; align-items: center; justify-content: center; }
.task.on { border: 1px solid #4d6079; border-radius: 3px; background: linear-gradient(135deg, #eef3f9, #ccd9e9 50%, #dce6f0); box-shadow: inset 0 0 0 1px #f6f9fc; }
.app { margin-bottom: 4px; }
.tray { margin-left: auto; height: 38px; display: flex; align-items: center; color: #fff; gap: 7px; }
.clock { width: 72px; margin: 0 -7px 0 0; text-align: center; line-height: 17px; letter-spacing: -0.3px; }
.peek { width: 15px; height: 38px; border: 1px solid #3e4f63; background: linear-gradient(135deg, #8d9eb2, #5c6f86); }
```
